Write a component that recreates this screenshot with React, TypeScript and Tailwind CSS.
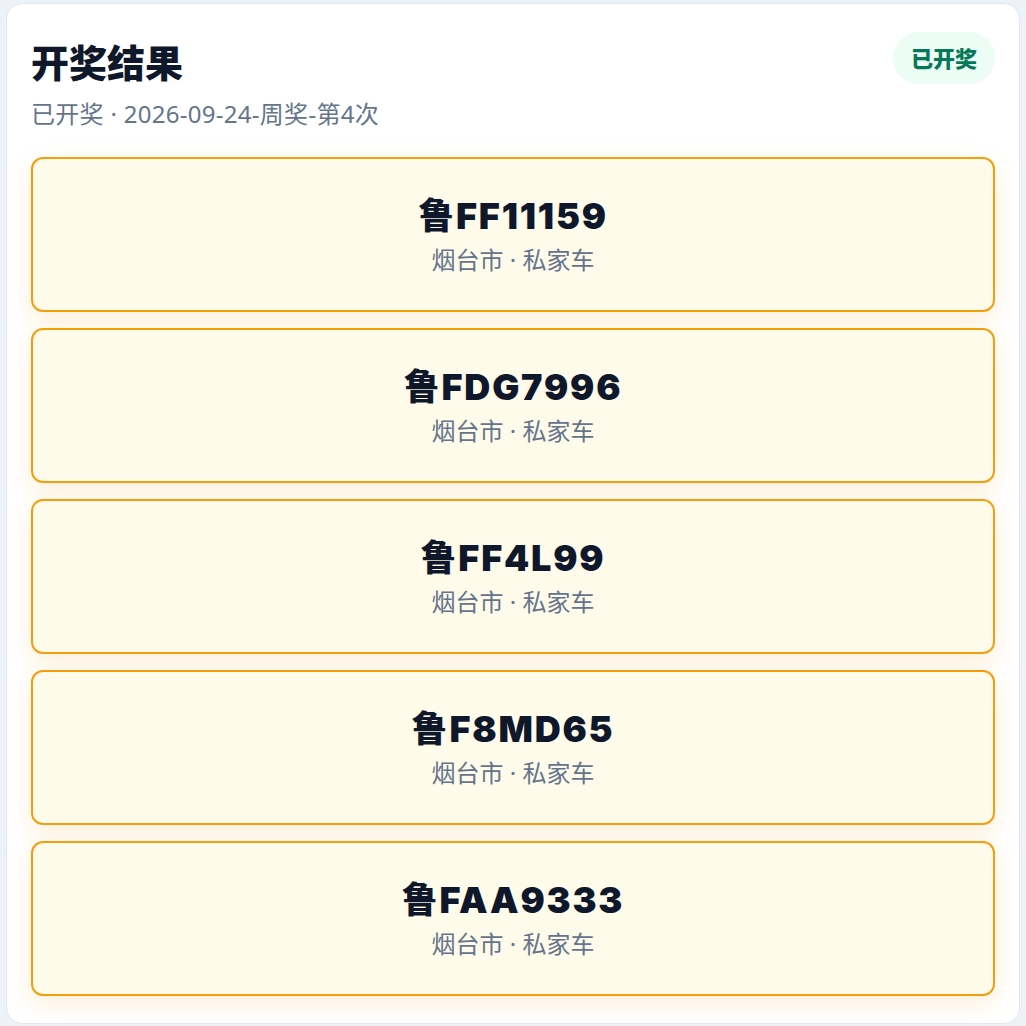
import React from "react";

const plates = ["鲁FF11159", "鲁FDG7996", "鲁FF4L99", "鲁F8MD65", "鲁FAA9333"];

export default function App() {
  return (
    <div
      className="min-h-screen bg-[#eef1f6] px-[6px] pt-[3px]"
      style={{ fontFamily: '"Noto Sans", "Noto Sans CJK SC", sans-serif' }}
    >
      <div className="rounded-2xl border border-[#e3e6ec] bg-white px-6 pt-7 pb-[27px]">
        <div className="flex items-start justify-between">
          <div className="mt-2">
            <h1 className="text-[38px] font-black leading-[44px] text-[#0f172a]">开奖结果</h1>
            <p className="mt-[14px] text-[24px] leading-[32px] tracking-[0.012em] text-[#64748b]">
              已开奖 · 2026-09-24-周奖-第4次
            </p>
          </div>
          <div className="flex h-[52px] items-center rounded-full bg-[#ecfdf5] px-[18px] text-[22px] font-black text-[#047857]">
            已开奖
          </div>
        </div>
        <div className="mt-[27px] flex flex-col gap-4">
          {plates.map((p) => (
            <div
              key={p}
              className="flex h-[155px] flex-col items-center justify-center rounded-xl border-2 border-[#f59e0b] bg-[#fffbeb] shadow-[0_8px_24px_rgba(245,158,11,0.16)]"
            >
              <div
                className="text-[36px] font-black leading-[44px] tracking-wider text-[#0f172a]"
                style={{ fontFamily: 'Inter, "Noto Sans CJK SC", sans-serif' }}
              >
                {p}
              </div>
              <div className="mt-[6px] text-[24px] leading-[32px] text-[#64748b]">烟台市 · 私家车</div>
            </div>
          ))}
        </div>
      </div>
    </div>
  );
}
